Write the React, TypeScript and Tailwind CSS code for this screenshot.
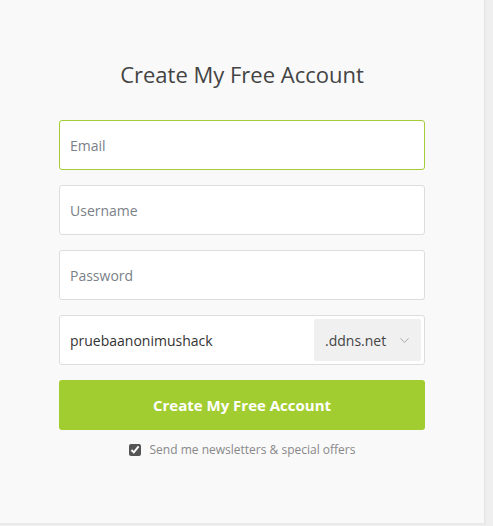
import { ChevronDown } from "lucide-react"

export default function App() {
  return (
    <div className="min-h-[526px] bg-[#efefef] font-['Open_Sans',sans-serif]">
      <div className="flex h-[524px] w-[484px] flex-col items-center border-b border-[#e8e8e8] bg-[#f9f9f9] shadow-[1px_0_2px_rgba(0,0,0,0.06)]">
        <h1 className="mt-[59px] text-[22px] leading-[30px] text-[#444]">
          Create My Free Account
        </h1>

        <form className="mt-[31px] flex w-[366px] flex-col gap-[15px]">
          <input
            type="email"
            placeholder="Email"
            className="h-[50px] rounded-[3px] border border-[#a5cd39] bg-white px-[10px] text-[14px] text-[#444] outline-none placeholder:text-[#7a7f88] caret-[#333]"
            autoFocus
          />
          <input
            type="text"
            placeholder="Username"
            className="h-[50px] rounded-[3px] border border-[#ddd] bg-white px-[10px] text-[14px] text-[#444] outline-none placeholder:text-[#7a7f88]"
          />
          <input
            type="password"
            placeholder="Password"
            className="h-[50px] rounded-[3px] border border-[#ddd] bg-white px-[10px] text-[14px] text-[#444] outline-none placeholder:text-[#7a7f88]"
          />

          {/* hostname + domain */}
          <div className="flex h-[50px] items-center rounded-[3px] border border-[#ddd] bg-white pr-[3px]">
            <input
              type="text"
              defaultValue="pruebaanonimushack"
              className="h-full min-w-0 flex-1 bg-transparent px-[10px] text-[14px] text-[#333] outline-none"
            />
            <div className="flex h-[42px] w-[107px] items-center justify-between rounded-[2px] bg-[#f0f0f0] pl-[11px] pr-[9px] text-[14px] text-[#444]">
              <span>.ddns.net</span>
              <ChevronDown className="h-[15px] w-[15px] text-[#999]" strokeWidth={1.3} />
            </div>
          </div>

          <button
            type="button"
            className="h-[50px] rounded-[3px] bg-[#a2cd30] text-[15px] font-bold text-white"
          >
            Create My Free Account
          </button>
        </form>

        <label className="mt-[11px] flex items-center gap-[9px] text-[12px] text-[#888]">
          <input type="checkbox" defaultChecked className="h-[12px] w-[12px] accent-[#555]" />
          Send me newsletters &amp; special offers
        </label>
      </div>
    </div>
  )
}
